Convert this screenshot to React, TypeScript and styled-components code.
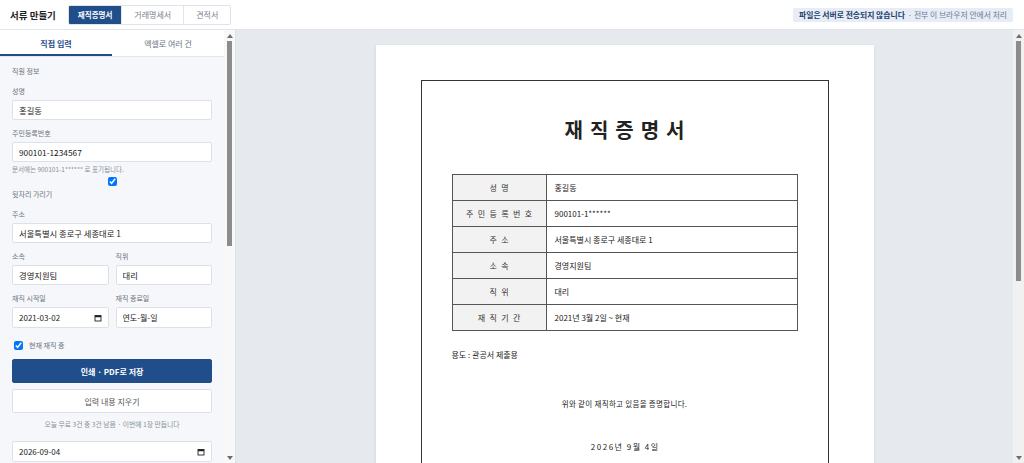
import React from "react";
import styled, { createGlobalStyle } from "styled-components";

const GlobalStyle = createGlobalStyle`
  html, body { margin: 0; padding: 0; height: 100%; }
  body {
    font-family: "Noto Sans CJK KR", "Noto Sans", sans-serif;
    color: #222;
    background: #fff;
  }
  #root { height: 100%; }
  *, *::before, *::after { box-sizing: border-box; }
`;

const Shell = styled.div`
  height: 100vh;
  display: flex;
  flex-direction: column;
  overflow: hidden;
`;

const TopBar = styled.header`
  height: 30px;
  flex: none;
  display: flex;
  align-items: center;
  justify-content: space-between;
  padding: 0 11px 0 10px;
  border-bottom: 1px solid #e2e5ea;
  background: #fff;
`;

const Brand = styled.div`
  display: flex;
  align-items: center;
  gap: 12px;
`;

const AppTitle = styled.h1`
  margin: 0;
  font-size: 9.5px;
  font-weight: 700;
  color: #1f2328;
`;

const DocTabs = styled.div`
  display: flex;
  border: 1px solid #dfe3e8;
  border-radius: 2px;
  overflow: hidden;
`;

const DocTab = styled.button<{ $active?: boolean }>`
  height: 18px;
  padding: ${(p) => (p.$active ? "0 9px" : "0 12px")};
  border: 0;
  border-left: 1px solid #e3e6ea;
  font-family: inherit;
  font-size: ${(p) => (p.$active ? "7.5px" : "8px")};
  background: ${(p) => (p.$active ? "#1f4e8a" : "#fff")};
  color: ${(p) => (p.$active ? "#fff" : "#7a808a")};
  font-weight: ${(p) => (p.$active ? 700 : 400)};
  &:first-child { border-left: 0; }
`;

const Notice = styled.div`
  height: 14px;
  display: flex;
  align-items: center;
  gap: 3px;
  padding: 0 6px;
  border-radius: 2px;
  background: #e7edf6;
  font-size: 7.8px;
  color: #6b7a90;
`;

const NoticeStrong = styled.strong`
  color: #24406b;
  font-weight: 700;
`;

const Body = styled.div`
  flex: 1;
  min-height: 0;
  display: flex;
`;

const Sidebar = styled.aside`
  width: 236px;
  flex: none;
  display: flex;
  background: #f5f7fa;
  border-right: 1px solid #dde1e7;
`;

const SidebarScroll = styled.div`
  flex: 1;
  min-width: 0;
  overflow: hidden;
`;

/* visual scrollbar (the screenshot shows classic scrollbars) */
const ScrollTrack = styled.div<{ $bg: string }>`
  width: 11px;
  flex: none;
  display: flex;
  flex-direction: column;
  align-items: center;
  background: ${(p) => p.$bg};
`;

const ScrollArrow = styled.div`
  height: 11px;
  width: 11px;
  flex: none;
  display: flex;
  align-items: center;
  justify-content: center;
`;

const ScrollThumb = styled.div`
  width: 5px;
  flex: none;
  background: #8c8c8c;
`;

const FakeScrollbar = ({ thumb, bg }: { thumb: number; bg: string }) => (
  <ScrollTrack $bg={bg} aria-hidden="true">
    <ScrollArrow>
      <svg width="6" height="4" viewBox="0 0 6 4">
        <polygon points="3,0 6,4 0,4" fill="#6e6e6e" />
      </svg>
    </ScrollArrow>
    <ScrollThumb style={{ height: thumb }} />
    <div style={{ flex: 1 }} />
    <ScrollArrow>
      <svg width="6" height="4" viewBox="0 0 6 4">
        <polygon points="0,0 6,0 3,4" fill="#6e6e6e" />
      </svg>
    </ScrollArrow>
  </ScrollTrack>
);

const ModeTabs = styled.div`
  display: grid;
  grid-template-columns: 1fr 1fr;
  background: #fff;
  border-bottom: 1px solid #e3e6ea;
`;

const ModeTab = styled.button<{ $active?: boolean }>`
  height: 26px;
  border: 0;
  background: transparent;
  font-family: inherit;
  font-size: 8px;
  color: ${(p) => (p.$active ? "#1f4e8a" : "#6b7280")};
  font-weight: ${(p) => (p.$active ? 700 : 400)};
  box-shadow: ${(p) => (p.$active ? "inset 0 -2px 0 #1f4e8a" : "none")};
`;

const Form = styled.div`
  display: flex;
  flex-direction: column;
  padding: 10px 12px 40px;
`;

const SectionLabel = styled.div`
  font-size: 7px;
  line-height: 9px;
  color: #6b7280;
  margin-bottom: 11px;
`;

const Field = styled.div`
  display: flex;
  flex-direction: column;
  min-width: 0;
  margin-bottom: 9px;
`;

const Label = styled.label`
  font-size: 7px;
  line-height: 9px;
  color: #6b7280;
  margin-bottom: 4px;
`;

const TextInput = styled.input`
  width: 100%;
  height: 20px;
  border: 1px solid #dde1e7;
  border-radius: 2px;
  background: #fff;
  padding: 0 6px;
  font-family: inherit;
  font-size: 8.3px;
  color: #222;
  outline: none;
`;

const Hint = styled.div`
  margin-top: 3px;
  font-size: 6.5px;
  line-height: 9px;
  color: #8a9099;
`;

const MaskToggle = styled.label`
  display: block;
  padding-bottom: 2px;
  font-size: 7px;
  line-height: 9px;
  color: #6b7280;
`;

const CenterCheck = styled.input`
  display: block;
  width: 9px;
  height: 9px;
  margin: 3px auto 4px;
`;

const Row = styled.div`
  display: grid;
  grid-template-columns: 1fr 1fr;
  gap: 7px;
`;

const DateBox = styled.div`
  height: 21px;
  display: flex;
  align-items: center;
  justify-content: space-between;
  border: 1px solid #dde1e7;
  border-radius: 2px;
  background: #fff;
  padding: 0 6px;
`;

const DateText = styled.input`
  flex: 1;
  min-width: 0;
  border: 0;
  background: transparent;
  padding: 0;
  font-family: inherit;
  font-size: 8px;
  color: #222;
  outline: none;
`;

const CheckRow = styled.label`
  height: 16px;
  display: flex;
  align-items: center;
  gap: 6px;
  padding-left: 2px;
  margin-bottom: 6px;
  font-size: 7px;
  color: #6b7280;
`;

const SmallCheck = styled.input`
  width: 9px;
  height: 9px;
  margin: 0;
`;

const Button = styled.button<{ $primary?: boolean }>`
  height: 24px;
  width: 100%;
  border-radius: 2px;
  font-family: inherit;
  font-size: 8px;
  border: 1px solid ${(p) => (p.$primary ? "#1f4e8a" : "#dde1e7")};
  background: ${(p) => (p.$primary ? "#1f4e8a" : "#fff")};
  color: ${(p) => (p.$primary ? "#fff" : "#555")};
  font-weight: ${(p) => (p.$primary ? 700 : 400)};
  & + & { margin-top: 6px; }
`;

const Quota = styled.div`
  margin: 6px 0 12px;
  text-align: center;
  font-size: 6.8px;
  line-height: 10px;
  color: #8a9099;
`;

const Preview = styled.main`
  flex: 1;
  min-width: 0;
  display: flex;
  background: #e6e9ed;
`;

const PreviewScroll = styled.div`
  flex: 1;
  min-width: 0;
  overflow: hidden;
  padding: 15px 0 30px;
`;

const Page = styled.div`
  width: 498px;
  margin: 0 auto;
  background: #fff;
  padding: 35px 45px;
  box-shadow: 0 1px 3px rgba(0, 0, 0, 0.1);
`;

const Frame = styled.div`
  min-height: 634px;
  border: 1.5px solid #333;
  padding: 35px 30px 30px;
  color: #222;
`;

const DocTitle = styled.h2`
  margin: 0 0 30px;
  font-size: 20px;
  line-height: 28px;
  font-weight: 700;
  text-align: center;
  letter-spacing: 0.35em;
  text-indent: 0.35em;
`;

const InfoTable = styled.table`
  width: 100%;
  border-collapse: collapse;
  font-size: 8px;
`;

const Th = styled.th`
  width: 94px;
  height: 26px;
  border: 1px solid #555;
  background: #f2f2f2;
  font-weight: 400;
  text-align: center;
  letter-spacing: 0.55em;
  text-indent: 0.55em;
  color: #333;
`;

const Td = styled.td`
  height: 26px;
  border: 1px solid #555;
  padding: 0 8px;
  color: #222;
`;

const Purpose = styled.p`
  margin: 18px 0 0;
  font-size: 8px;
  line-height: 12px;
`;

const Statement = styled.p`
  margin: 37px 0 0;
  font-size: 7.5px;
  line-height: 12px;
  text-align: center;
  letter-spacing: 0.3px;
`;

const IssueDate = styled.p`
  margin: 31px 0 0;
  font-size: 8px;
  line-height: 12px;
  text-align: center;
  letter-spacing: 1.5px;
  text-indent: 1.5px;
`;

const Company = styled.p`
  margin: 40px 0 0;
  font-size: 9px;
  line-height: 14px;
  text-align: center;
  letter-spacing: 1px;
`;

const CalendarIcon = () => (
  <svg width="8" height="8" viewBox="0 0 16 16" aria-hidden="true">
    <rect x="2" y="3" width="12" height="11" fill="none" stroke="#222" strokeWidth="1.8" />
    <rect x="2" y="3" width="12" height="3.5" fill="#222" />
  </svg>
);

const rows: [string, string][] = [
  ["성명", "홍길동"],
  ["주민등록번호", "900101-1******"],
  ["주소", "서울특별시 종로구 세종대로 1"],
  ["소속", "경영지원팀"],
  ["직위", "대리"],
  ["재직기간", "2021년 3월 2일 ~ 현재"],
];

export default function App() {
  return (
    <Shell>
      <GlobalStyle />
      <TopBar>
        <Brand>
          <AppTitle>서류 만들기</AppTitle>
          <DocTabs>
            <DocTab $active>재직증명서</DocTab>
            <DocTab>거래명세서</DocTab>
            <DocTab>견적서</DocTab>
          </DocTabs>
        </Brand>
        <Notice>
          <NoticeStrong>파일은 서버로 전송되지 않습니다</NoticeStrong>
          <span>· 전부 이 브라우저 안에서 처리</span>
        </Notice>
      </TopBar>
      <Body>
        <Sidebar>
          <SidebarScroll>
            <ModeTabs>
              <ModeTab $active>직접 입력</ModeTab>
              <ModeTab>엑셀로 여러 건</ModeTab>
            </ModeTabs>
            <Form>
              <SectionLabel>직원 정보</SectionLabel>
              <Field>
                <Label>성명</Label>
                <TextInput defaultValue="홍길동" />
              </Field>
              <Field>
                <Label>주민등록번호</Label>
                <TextInput defaultValue="900101-1234567" />
                <Hint>문서에는 900101-1****** 로 표기됩니다.</Hint>
                <MaskToggle>
                  <CenterCheck type="checkbox" defaultChecked />
                  뒷자리 가리기
                </MaskToggle>
              </Field>
              <Field>
                <Label>주소</Label>
                <TextInput defaultValue="서울특별시 종로구 세종대로 1" />
              </Field>
              <Row>
                <Field>
                  <Label>소속</Label>
                  <TextInput defaultValue="경영지원팀" />
                </Field>
                <Field>
                  <Label>직위</Label>
                  <TextInput defaultValue="대리" />
                </Field>
              </Row>
              <Row>
                <Field>
                  <Label>재직 시작일</Label>
                  <DateBox>
                    <DateText readOnly value="2021-03-02" />
                    <CalendarIcon />
                  </DateBox>
                </Field>
                <Field>
                  <Label>재직 종료일</Label>
                  <DateBox>
                    <DateText readOnly value="연도-월-일" />
                  </DateBox>
                </Field>
              </Row>
              <CheckRow>
                <SmallCheck type="checkbox" defaultChecked />
                현재 재직 중
              </CheckRow>
              <Button $primary>인쇄 · PDF로 저장</Button>
              <Button>입력 내용 지우기</Button>
              <Quota>오늘 무료 3건 중 3건 남음 · 이번에 1장 만듭니다</Quota>
              <Field>
                <DateBox>
                  <DateText readOnly value="2026-09-04" />
                  <CalendarIcon />
                </DateBox>
              </Field>
              <Field>
                <Label>용도</Label>
                <TextInput defaultValue="관공서 제출용" />
              </Field>
            </Form>
          </SidebarScroll>
          <FakeScrollbar thumb={205} bg="#f8f8f8" />
        </Sidebar>
        <Preview>
          <PreviewScroll>
            <Page>
              <Frame>
                <DocTitle>재직증명서</DocTitle>
                <InfoTable>
                  <tbody>
                    {rows.map(([k, v]) => (
                      <tr key={k}>
                        <Th>{k}</Th>
                        <Td>{v}</Td>
                      </tr>
                    ))}
                  </tbody>
                </InfoTable>
                <Purpose>용도 : 관공서 제출용</Purpose>
                <Statement>위와 같이 재직하고 있음을 증명합니다.</Statement>
                <IssueDate>2026년 9월 4일</IssueDate>
                <Company>주식회사 예시 대표이사 김대표 (인)</Company>
              </Frame>
            </Page>
          </PreviewScroll>
          <FakeScrollbar thumb={240} bg="#f1f1f1" />
        </Preview>
      </Body>
    </Shell>
  );
}
